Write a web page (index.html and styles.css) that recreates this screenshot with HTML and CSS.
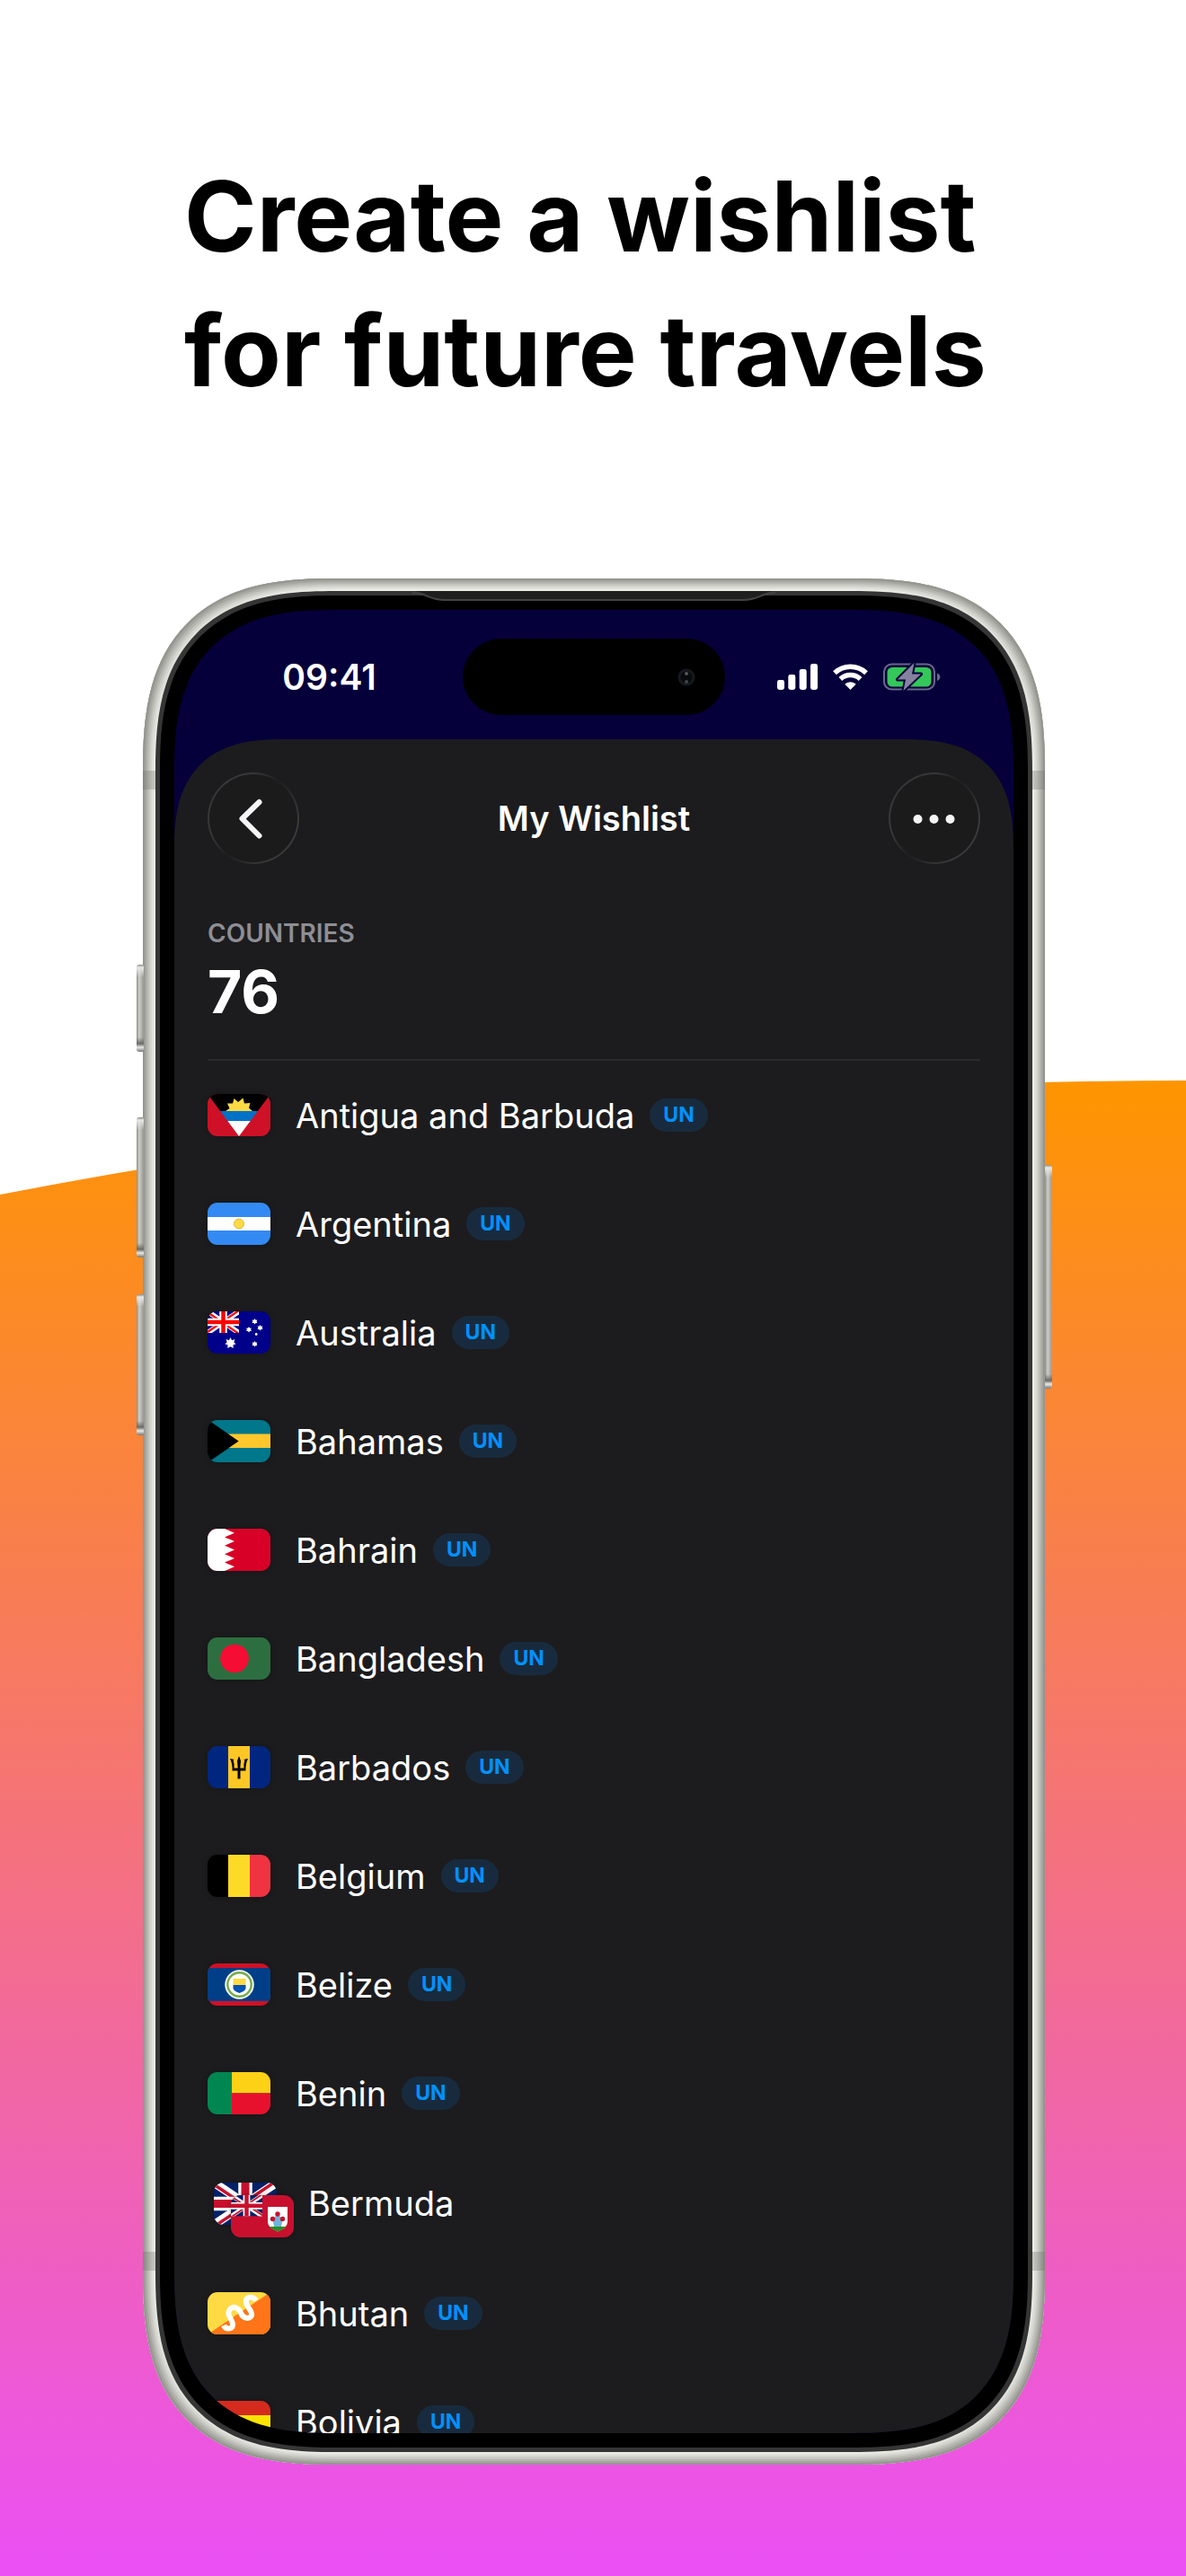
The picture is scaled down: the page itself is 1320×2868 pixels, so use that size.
FILE: index.html
```html
<!DOCTYPE html>
<html lang="en">
<head>
<meta charset="utf-8">
<meta name="viewport" content="width=device-width, initial-scale=1">
<title>Create a wishlist for future travels</title>
<link rel="stylesheet" href="styles.css">
</head>
<body>
<main class="poster">
  <svg class="hill" viewBox="0 0 1320 1665" preserveAspectRatio="none" aria-hidden="true">
    <defs>
      <linearGradient id="sunset" x1="0" y1="0" x2="0" y2="1">
        <stop offset="0" stop-color="#ff9500"/>
        <stop offset="1" stop-color="#ea50f5"/>
      </linearGradient>
    </defs>
    <path d="M0 127Q660 0 1320 0V1665H0Z" fill="url(#sunset)"/>
  </svg>

  <h1 class="headline">Create a wishlist<br>for future travels</h1>

  <div class="phone">
    <span class="key key-action"></span>
    <span class="key key-up"></span>
    <span class="key key-down"></span>
    <span class="key key-power"></span>
    <span class="band band-top"></span>
    <span class="band band-bottom"></span>
    <div class="bezel">
      <svg class="speaker" viewBox="0 0 404 14" aria-hidden="true">
        <path d="M0 0C16 0 18 10 36 10H368C386 10 388 0 404 0Z" fill="#1f1f1f"/>
        <path d="M0 2C16 2 18 10 36 10H368C386 10 388 2 404 2" fill="none" stroke="#444" stroke-width="2"/>
      </svg>
      <div class="screen">
        <div class="status">
          <span class="time">09:41</span>
          <div class="island">
            <svg width="20" height="20" viewBox="0 0 20 20" aria-hidden="true">
              <circle cx="10" cy="10" r="8" fill="#07090b" stroke="#15191f" stroke-width="3"/>
              <circle cx="10" cy="6" r="2" fill="#555"/><circle cx="10" cy="15" r="2" fill="#444"/>
            </svg>
          </div>
          <div class="status-icons">
            <svg width="45" height="29" viewBox="0 0 45 29" fill="#fff" aria-hidden="true">
              <rect y="18" width="8" height="11" rx="2.4"/><rect x="12.3" y="12" width="8" height="17" rx="2.4"/>
              <rect x="24.7" y="6" width="8" height="23" rx="2.4"/><rect x="37" width="8" height="29" rx="2.4"/>
            </svg>
            <svg width="39" height="29" viewBox="0 0 39 29" fill="none" aria-hidden="true">
              <path d="M2 10.2A25.500 25.500 0 0 1 37 10.200" stroke="#fff" stroke-width="5.600"/>
              <path d="M8.400 17A16 16 0 0 1 30.600 17" stroke="#fff" stroke-width="5.400"/>
              <path d="M19.500 29L13.200 22.700A9 9 0 0 1 25.800 22.700Z" fill="#fff"/>
            </svg>
            <svg width="64" height="31" viewBox="0 0 64 31" aria-hidden="true">
              <rect x="1" y="1.500" width="56" height="28" rx="8.500" fill="none" stroke="#6a668a" stroke-width="2"/>
              <path d="M60 11.500C64.500 13 64.500 18.500 60 20Z" fill="#6a668a"/>
              <rect x="4.500" y="5" width="49" height="21.500" rx="5.500" fill="#34c759"/>
              <path d="M34.500 0L16 18.500H25L22.500 31L42 12.500H32Z" fill="#8582a0" stroke="#05003a" stroke-width="4" stroke-linejoin="round" paint-order="stroke"/>
            </svg>
          </div>
        </div>

        <div class="sheet">
          <header class="bar">
            <button class="round" type="button" aria-label="Back">
              <svg width="102" height="102" viewBox="0 0 102 102" fill="none" aria-hidden="true">
                <path d="M57.500 33L38.500 51.500L57.500 70.500" stroke="#f5f5f7" stroke-width="6" stroke-linecap="round" stroke-linejoin="round"/>
              </svg>
            </button>
            <h2 class="title">My Wishlist</h2>
            <button class="round" type="button" aria-label="More">
              <svg width="102" height="102" viewBox="0 0 102 102" fill="#f5f5f7" aria-hidden="true">
                <circle cx="32.500" cy="52" r="5"/><circle cx="50.500" cy="52" r="5"/><circle cx="68.500" cy="52" r="5"/>
              </svg>
            </button>
          </header>

          <section class="summary">
            <h3 class="label">COUNTRIES</h3>
            <p class="count">76</p>
          </section>

          <ul class="list">
            <li class="row">
              <svg class="flag" viewBox="0 0 70 47" aria-hidden="true">
                <path fill="#ce1126" d="M0 0H70V47H0Z"/><path d="M0 0H70L55.900 19H14.100Z"/>
                <path fill="#0072c6" d="M14.100 19H55.900L47.700 30H22.300Z"/><path fill="#fff" d="M22.300 30H47.700L35 47Z"/>
                <path fill="#ffda44" d="M20 19L24.500 16L22 10.500L28 10.500L29.500 5L34 9L39.500 4.500L41 10.500L47.500 10L46 15.500L50 19Z"/>
              </svg>
              <span class="name">Antigua and Barbuda</span><span class="badge">UN</span>
            </li>
            <li class="row">
              <svg class="flag" viewBox="0 0 70 47" aria-hidden="true">
                <path fill="#338af3" d="M0 0H70V47H0Z"/><path fill="#fff" d="M0 16H70V31H0Z"/>
                <circle cx="35" cy="23.500" r="5.500" fill="#ffda44" stroke="#e0b63a"/>
              </svg>
              <span class="name">Argentina</span><span class="badge">UN</span>
            </li>
            <li class="row">
              <svg class="flag" viewBox="0 0 70 47" aria-hidden="true">
                <path fill="#00008b" d="M0 0H70V47H0Z"/>
                <svg width="35" height="24" viewBox="0 0 70 47" preserveAspectRatio="none">
                  <path stroke="#fff" stroke-width="11" d="M0 0L70 47M70 0L0 47"/>
                  <path stroke="#f00" stroke-width="4.500" d="M0 2L70 49M70 -2L0 45"/>
                  <path stroke="#fff" stroke-width="17" d="M35 0V47M0 23.500H70"/>
                  <path stroke="#f00" stroke-width="9" d="M35 0V47M0 23.500H70"/>
                </svg>
                <g fill="#fff">
                  <path d="M25.500 29l1.600 3.200 3.400-1.200-1.200 3.300 2.200 2.200-3 .8.200 3.700-3.200-1.800-3.200 1.800.2-3.700-3-.8 2.200-2.200-1.200-3.300 3.400 1.200Z"/>
                  <path d="M52.500 8l1 1.700 1.900-.3-.8 1.800.8 1.800-1.900-.1-1 1.600-1-1.600-1.900.1.800-1.800-.8-1.800 1.900.3Z"/>
                  <path d="M46 17l1 1.700 1.900-.3-.8 1.800.8 1.800-1.900-.1-1 1.600-1-1.600-1.900.1.800-1.800-.8-1.800 1.900.3Z"/>
                  <path d="M58.500 15l1 1.700 1.900-.3-.8 1.800.8 1.800-1.900-.1-1 1.600-1-1.600-1.900.1.800-1.800-.8-1.800 1.900.3Z"/>
                  <path d="M52.500 33l1 1.700 1.900-.3-.8 1.800.8 1.800-1.900-.1-1 1.600-1-1.600-1.900.1.800-1.800-.8-1.800 1.900.3Z"/>
                  <circle cx="54.200" cy="25.500" r="1.400"/>
                </g>
              </svg>
              <span class="name">Australia</span><span class="badge">UN</span>
            </li>
            <li class="row">
              <svg class="flag" viewBox="0 0 70 47" aria-hidden="true">
                <path fill="#00778b" d="M0 0H70V47H0Z"/><path fill="#ffc72c" d="M0 15.500H70V31H0Z"/><path d="M0 -.5L34.700 23.500L0 47.500Z"/>
              </svg>
              <span class="name">Bahamas</span><span class="badge">UN</span>
            </li>
            <li class="row">
              <svg class="flag" viewBox="0 0 70 47" aria-hidden="true">
                <path fill="#d80027" d="M0 0H70V47H0Z"/>
                <path fill="#fff" d="M0 0H19L30 4.700L19 9.400L30 14.100L19 18.800L30 23.500L19 28.200L30 32.900L19 37.600L30 42.300L19 47H0Z"/>
              </svg>
              <span class="name">Bahrain</span><span class="badge">UN</span>
            </li>
            <li class="row">
              <svg class="flag" viewBox="0 0 70 47" aria-hidden="true">
                <path fill="#2d6e40" d="M0 0H70V47H0Z"/><circle cx="30" cy="23.500" r="15.800" fill="#f60d33"/>
              </svg>
              <span class="name">Bangladesh</span><span class="badge">UN</span>
            </li>
            <li class="row">
              <svg class="flag" viewBox="0 0 70 47" aria-hidden="true">
                <path fill="#00267f" d="M0 0H70V47H0Z"/><path fill="#ffc726" d="M23 0H47V47H23Z"/>
                <path d="M35 11L37 16.500L36.300 24.500H40.500Q40 19 41.500 15.500L40 15L45 14Q42 20 42.500 27.500H36.500V36.500H33.500V27.500H27.500Q28 20 25 14L30 15L28.500 15.500Q30 19 29.500 24.500H33.700L33 16.500Z"/>
              </svg>
              <span class="name">Barbados</span><span class="badge">UN</span>
            </li>
            <li class="row">
              <svg class="flag" viewBox="0 0 70 47" aria-hidden="true">
                <path d="M0 0H23V47H0Z"/><path fill="#fdda25" d="M23 0H47V47H23Z"/><path fill="#ef3340" d="M47 0H70V47H47Z"/>
              </svg>
              <span class="name">Belgium</span><span class="badge">UN</span>
            </li>
            <li class="row">
              <svg class="flag" viewBox="0 0 70 47" aria-hidden="true">
                <path fill="#ce1126" d="M0 0H70V47H0Z"/><path fill="#003f87" d="M0 5H70V42H0Z"/>
                <circle cx="35.500" cy="23.500" r="16.200" fill="#fff"/><circle cx="35.500" cy="23.500" r="13.200" fill="none" stroke="#75ac4b" stroke-width="2.400"/>
                <path fill="#ffda44" d="M28.500 17H42.500V24H28.500Z"/><path fill="#0052b4" d="M28.500 24H42.500V27.500Q42.500 30.500 35.500 33Q28.500 30.500 28.500 27.500Z"/>
              </svg>
              <span class="name">Belize</span><span class="badge">UN</span>
            </li>
            <li class="row">
              <svg class="flag" viewBox="0 0 70 47" aria-hidden="true">
                <path fill="#008751" d="M0 0H27V47H0Z"/><path fill="#fcd116" d="M27 0H70V23.500H27Z"/><path fill="#e8112d" d="M27 23.500H70V47H27Z"/>
              </svg>
              <span class="name">Benin</span><span class="badge">UN</span>
            </li>
            <li class="row row-pair">
              <span class="pair">
                <svg class="flag" viewBox="0 0 70 47" aria-hidden="true">
                  <symbol id="union" viewBox="0 0 70 47" preserveAspectRatio="none">
                    <path fill="#012169" d="M0 0H70V47H0Z"/>
                    <path stroke="#fff" stroke-width="9.500" d="M0 0L70 47M70 0L0 47"/>
                    <path stroke="#c8102e" stroke-width="3.500" d="M-1 1.500L35 25.500M35 21.500L71 45.500M69 -1.500L35 21.500M35 25.500L1 48.500"/>
                    <path stroke="#fff" stroke-width="15.500" d="M35 0V47M0 23.500H70"/>
                    <path stroke="#c8102e" stroke-width="9" d="M35 0V47M0 23.500H70"/>
                  </symbol>
                  <use href="#union" width="70" height="47"/>
                </svg>
                <svg class="flag flag-front" viewBox="0 0 70 47" aria-hidden="true">
                  <path fill="#c8102e" d="M0 0H70V47H0Z"/>
                  <use href="#union" width="35" height="23.500"/>
                  <path fill="#fff" d="M41 13H63V30Q63 36 52 40.500Q41 36 41 30Z"/>
                  <path fill="#2e8b28" d="M42.500 35H61.500Q58.500 38 52 40.500Q45.500 38 42.500 35Z"/>
                  <path fill="#6cb6dc" d="M50 22H54L57 30L56 35H48L47 30Z"/>
                  <g fill="#c8102e"><circle cx="52" cy="21" r="2.700"/><circle cx="46.500" cy="26.500" r="2.700"/><circle cx="57.500" cy="26.500" r="2.700"/></g>
                </svg>
              </span>
              <span class="name">Bermuda</span>
            </li>
            <li class="row">
              <svg class="flag" viewBox="0 0 70 47" aria-hidden="true">
                <path fill="#ffda44" d="M0 0H70V47H0Z"/><path fill="#ff7518" d="M70 0V47H0Z"/>
                <path fill="none" stroke="#fff" stroke-width="6" d="M18 37C20 41.500 27 42 28 37C29 31 20 26 25 19C29 14.500 35 18 37 23C39 29 46 31 49 26C51 21 41 15 43 8.500C45 5 51 4.500 54 9.500"/>
              </svg>
              <span class="name">Bhutan</span><span class="badge">UN</span>
            </li>
            <li class="row">
              <svg class="flag" viewBox="0 0 70 47" aria-hidden="true">
                <path fill="#d52b1e" d="M0 0H70V16H0Z"/><path fill="#f9e300" d="M0 16H70V31H0Z"/><path fill="#007934" d="M0 31H70V47H0Z"/>
              </svg>
              <span class="name">Bolivia</span><span class="badge">UN</span>
            </li>
          </ul>
        </div>
      </div>
    </div>
  </div>
</main>
</body>
</html>
```
FILE: styles.css
```css
* {
  box-sizing: border-box;
  margin: 0;
  padding: 0;
}

body {
  background: #fff;
  font-family: Inter, "Liberation Sans", sans-serif;
}

svg {
  display: block;
  flex: none;
}

.poster {
  position: relative;
  z-index: 0;
  padding: 165px 157px 124px 159px;
}

.hill {
  position: absolute;
  z-index: -1;
  bottom: 0;
  left: 0;
  width: 100%;
  aspect-ratio: 1320 / 1665;
}

.headline {
  padding-left: 46px;
  font-size: 109px;
  font-weight: 700;
  line-height: 150px;
  color: #000;
  white-space: nowrap;
}

/* Phone body: metal rim, dark edge, black bezel, screen */
.phone {
  position: relative;
  margin-top: 179px;
  padding: 14px;
  border-radius: 176px;
  background: #ecece6;
  box-shadow:
    inset 0 0 0 2px #969690,
    inset 0 0 0 4px #a6a6a0,
    inset 0 0 0 6px #b6b6b1,
    inset 0 0 0 8px #c6c6c1,
    inset 0 0 0 10px #d5d5d0,
    inset 0 0 0 12px #e1e1dc;
}

.bezel {
  position: relative;
  padding: 16px;
  border: 5px solid #353535;
  border-radius: 162px;
  background: #000;
}

.speaker {
  position: absolute;
  top: -5px;
  left: 50%;
  width: 404px;
  height: 14px;
  margin-left: -202px;
}

.key {
  position: absolute;
  left: -7px;
  width: 8px;
  border-radius: 3px 0 0 3px;
  background:
    linear-gradient(#8a8a86, #e8e8e4 3px, transparent 14px),
    linear-gradient(0deg, #77777a, #e8e8e4 5px, #6a6a66 9px, transparent 16px),
    linear-gradient(90deg, #8c8c88, #cfcfca 3px, #a0a09b 7px);
}

.key-action {
  top: 430px;
  height: 97px;
}

.key-up {
  top: 600px;
  height: 156px;
}

.key-down {
  top: 797px;
  height: 157px;
}

.key-power {
  top: 653px;
  right: -8px;
  left: auto;
  height: 249px;
  border-radius: 0 3px 3px 0;
}

.band {
  position: absolute;
  right: 0;
  left: 0;
  height: 21px;
  background: rgba(110, 110, 105, 0.3);
}

.band-top {
  top: 214px;
}

.band-bottom {
  bottom: 216px;
}

.screen {
  position: relative;
  display: flex;
  flex-direction: column;
  aspect-ratio: 934 / 2030;
  overflow: hidden;
  border-radius: 142px;
  background: #05003a;
}

.status {
  display: grid;
  flex: none;
  grid-template-columns: 1fr 292px 1fr;
  align-items: center;
  justify-items: center;
  height: 144px;
  padding: 5px 24px 0;
}

.time {
  font-size: 39px;
  font-weight: 600;
  line-height: 48px;
  color: #fff;
}

.island {
  display: flex;
  align-items: center;
  justify-content: flex-end;
  width: 292px;
  height: 85px;
  padding-right: 33px;
  border-radius: 43px;
  background: #000;
}

.status-icons {
  display: flex;
  align-items: center;
  gap: 17px;
}

.sheet {
  flex: 1;
  min-height: 0;
  padding: 37px 37px 0;
  border-radius: 100px 100px 0 0;
  background: #1c1c1e;
  color: #fff;
}

/* Continuous corners where the browser can draw them */
@supports (corner-shape: superellipse(1.4)) {
  .phone,
  .bezel,
  .screen,
  .sheet {
    corner-shape: superellipse(1.4);
  }

  .phone {
    border-radius: 215px;
  }

  .bezel {
    border-radius: 201px;
  }

  .screen {
    border-radius: 180px;
  }

  .sheet {
    border-radius: 124px 124px 0 0;
  }
}

.bar {
  display: flex;
  align-items: center;
  justify-content: space-between;
}

.round {
  width: 102px;
  height: 102px;
  border: 2px solid transparent;
  border-radius: 51px;
  background:
    linear-gradient(#1b1b1b, #1b1b1b) padding-box,
    linear-gradient(125deg, #37373a 30%, #1f1f21 50%, #3a3a3d 80%) border-box;
}

.round svg {
  margin: -2px;
}

.title {
  font-size: 38px;
  font-weight: 600;
  line-height: 48px;
}

.summary {
  display: flex;
  flex-direction: column;
  gap: 10px;
  margin-top: 60px;
  padding-bottom: 37px;
  border-bottom: 2px solid #2a2a2c;
}

.label {
  font-size: 28px;
  font-weight: 600;
  line-height: 34px;
  color: #8e8e95;
}

.count {
  font-size: 66px;
  font-weight: 700;
  line-height: 76px;
}

.list {
  list-style: none;
}

.row {
  display: flex;
  align-items: center;
  height: 121px;
}

.row-pair {
  height: 124px;
}

.flag {
  width: 70px;
  height: 47px;
  border-radius: 11px;
  box-shadow: 0 0 6px rgba(0, 0, 0, 0.25);
}

.pair {
  display: grid;
  width: 84px;
  height: 60px;
  padding: 7px 0 0 7px;
}

.pair .flag {
  grid-area: 1 / 1;
}

.pair .flag-front {
  margin: 14px 0 0 19px;
}

.name {
  margin-left: 28px;
  font-size: 38px;
  line-height: 48px;
}

.badge {
  margin-left: 17px;
  padding: 0 15px;
  border-radius: 19px;
  background: #182b3e;
  font-size: 23px;
  font-weight: 700;
  line-height: 37px;
  color: #0091ff;
}
```
